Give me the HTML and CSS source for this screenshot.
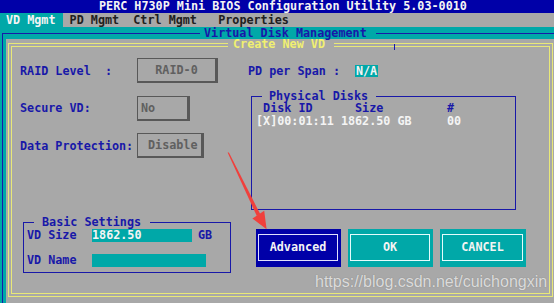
FILE: index.html
```html
<!DOCTYPE html>
<html>
  <head>
    <meta charset="utf-8">
    <title>PERC H730P Mini BIOS Configuration Utility</title>
    <link rel="stylesheet" href="styles.css">
  </head>
  <body>
    <header class="titlebar">PERC H730P Mini BIOS Configuration Utility 5.03-0010</header>
    <nav class="menubar"><span class="menu-active">VD Mgmt</span> PD Mgmt  Ctrl Mgmt   Properties</nav>
    <div class="work">
      <fieldset class="vframe">
        <legend>Virtual Disk Management</legend>
        <div class="panel">
          <fieldset class="create">
            <legend>Create New VD</legend>
            <div class="create-body">
              <div class="col-left">
                <div class="field-row">
                  <span class="label">RAID Level  :</span>
                  <span class="pick pick-raid">RAID-0</span>
                </div>
                <div class="field-row">
                  <span class="label">Secure VD:</span>
                  <span class="pick pick-secure">No</span>
                </div>
                <div class="field-row">
                  <span class="label">Data Protection:</span>
                  <span class="pick pick-dp">Disable</span>
                </div>
                <fieldset class="group basic">
                  <legend>Basic Settings</legend>
                  <div class="basic-body">
                    <div class="input-row">
                      <span class="input-label">VD Size</span>
                      <span class="input input-size">1862.50</span>
                      <span class="unit">GB</span>
                    </div>
                    <div class="input-row">
                      <span class="input-label">VD Name</span>
                      <span class="input input-name"></span>
                    </div>
                  </div>
                </fieldset>
              </div>
              <div class="col-right">
                <div class="field-row">
                  <span class="label">PD per Span :</span>
                  <span class="chip">N/A</span>
                </div>
                <fieldset class="group disks">
                  <legend>Physical Disks</legend>
                  <div class="disks-body">
                    <div class="disk-head"> Disk ID      Size         #</div>
                    <div class="disk-line">[X]00:01:11 1862.50 GB     00</div>
                  </div>
                </fieldset>
                <div class="buttons">
                  <span class="btn btn-advanced"><span class="btn-face">Advanced</span></span>
                  <span class="btn"><span class="btn-face">OK</span></span>
                  <span class="btn btn-wide"><span class="btn-face">CANCEL</span></span>
                </div>
              </div>
            </div>
          </fieldset>
        </div>
      </fieldset>
    </div>

    <!-- annotation arrow drawn over the screenshot -->
    <svg class="arrow" width="554" height="303" viewBox="0 0 554 303">
      <polygon points="227.6,152.6 228.9,152.4 260.2,214.1 256.8,215.9" fill="#f0403c"/>
      <polygon points="252.4,218.6 264.2,210.8 266.6,229.2" fill="#f0403c"/>
    </svg>
    <div class="watermark">https://blog.csdn.net/cuichongxin</div>
  </body>
</html>
```

FILE: styles.css
```css
body {
  background:  #a8a8a8;
  color:       #1818a8;
  font-family: "DejaVu Sans Mono", monospace;
  font-size:   11.75px;
  font-weight: bold;
  height:      303px;
  margin:      0;
  overflow:    hidden;
  position:    relative;
  width:       554px;
}
fieldset {
  margin:    0;
  min-width: 0;
  padding:   0;
}
legend {
  padding:     0;
  white-space: pre;
}
.titlebar {
  background:   #0000a8;
  color:        #f4f4f4;
  height:       13px;
  line-height:  13px;
  padding-left: 99px;
  white-space:  pre;
}
.menubar {
  color:       #202020;
  height:      14px;
  line-height: 14px;
  white-space: pre;
}
.menu-active {
  background: #00a8a8;
  color:      #f4f4f4;
  display:    inline-block;
  padding:    0 7px 0 6px;
}
.work {
  background:   #00a8a8;
  padding-left: 2px;
}
.vframe {
  border:       0;
  border-left:  1px solid #1818a8;
  border-top:   1px solid #1818a8;
  padding-left: 3px;
  position:     relative;
}
.vframe > legend {
  line-height: 12px;
  margin-left: 194px;
  padding:     0 9px 0 4px;
}
.vframe::after {
  background: #1818a8;
  content:    "";
  height:     6px;
  left:       391px;
  position:   absolute;
  top:        5px;
  width:      1px;
}
.panel {
  background: #a8a8a8;
  padding:    0 0 10px 2px;
}
.create {
  border:     4px double #e8e878;
  box-sizing: border-box;
  width:      545px;
}
.create > legend {
  color:       #f0f070;
  line-height: 11px;
  margin-left: 216px;
  padding:     0 9px 0 5px;
}
.create-body {
  display: flex;
  height:  243px;
}
.col-left {
  box-sizing:     border-box;
  display:        flex;
  flex-direction: column;
  padding:        8px 0 0 8px;
  width:          236px;
}
.col-right {
  display:        flex;
  flex:           1;
  flex-direction: column;
  padding-top:    8px;
}
.field-row {
  align-items: center;
  display:     flex;
  height:      25px;
}
.field-row + .field-row {
  margin-top: 12.5px;
}
.label {
  white-space: pre;
  width:       117px;
}
.col-right .label {
  width: auto;
}
.pick {
  border:        1px solid #585858;
  border-bottom: 2px solid #585858;
  border-right:  3px solid #585858;
  color:         #606060;
  height:        22px;
  line-height:   22px;
}
.pick-raid {
  text-align: center;
  width:      77px;
}
.pick-secure {
  padding-left: 3px;
  width:        46px;
}
.pick-dp {
  padding-left: 10px;
  width:        53px;
}
.chip {
  background:  #00a8a8;
  color:       #f4f4f4;
  line-height: 12px;
  margin-left: 15px;
  padding:     0 1px;
}
.group {
  border: 1px solid #1818a8;
}
.group > legend {
  line-height: 12px;
  margin-left: 10px;
}
.basic {
  box-sizing:  border-box;
  margin:      58px 0 0 3px;
  width:       208px;
}
.basic > legend {
  padding: 0 9px 0 8px;
}
.basic-body {
  padding: 1px 0 5px 3px;
}
.input-row {
  display:     flex;
  height:      13px;
  line-height: 13px;
}
.input-row + .input-row {
  margin-top: 12px;
}
.input-label {
  width: 65px;
}
.input {
  background: #00a8a8;
  color:      #f4f4f4;
}
.input-size {
  width: 100px;
}
.input-name {
  width: 114px;
}
.unit {
  margin-left: 6px;
}
.disks {
  box-sizing:  border-box;
  margin:      7px 0 0 3px;
  width:       265px;
}
.disks > legend {
  padding: 0 8px 0 7px;
}
.disks-body {
  height:       107px;
  line-height:  13px;
  padding-left: 4px;
}
.disk-head,
.disk-line {
  white-space: pre;
}
.disk-line {
  color: #f4f4f4;
}
.buttons {
  display: flex;
  gap:     7px;
  margin:  19px 0 0 8px;
}
.btn {
  background: #00a8a8;
  box-sizing: border-box;
  display:    block;
  height:     38px;
  padding:    5px 3px 6px 2px;
  width:      85px;
}
.btn-wide {
  width: 86px;
}
.btn-advanced {
  background: #0000a8;
}
.btn-face {
  border:      1px solid #e4fcfc;
  color:       #f4f4f4;
  display:     block;
  line-height: 25px;
  text-align:  center;
}
.btn-advanced .btn-face {
  border-color: #e0e0fc;
}
.arrow {
  left:           0;
  pointer-events: none;
  position:       absolute;
  top:            0;
}
.watermark {
  color:       rgba(255, 255, 255, 0.72);
  font-family: "Liberation Sans", Arial, sans-serif;
  font-size:   16px;
  font-weight: normal;
  left:        315px;
  line-height: 16px;
  position:    absolute;
  text-shadow: 0 0 1px rgba(80, 80, 80, 0.5);
  top:         274px;
  white-space: nowrap;
}
```
